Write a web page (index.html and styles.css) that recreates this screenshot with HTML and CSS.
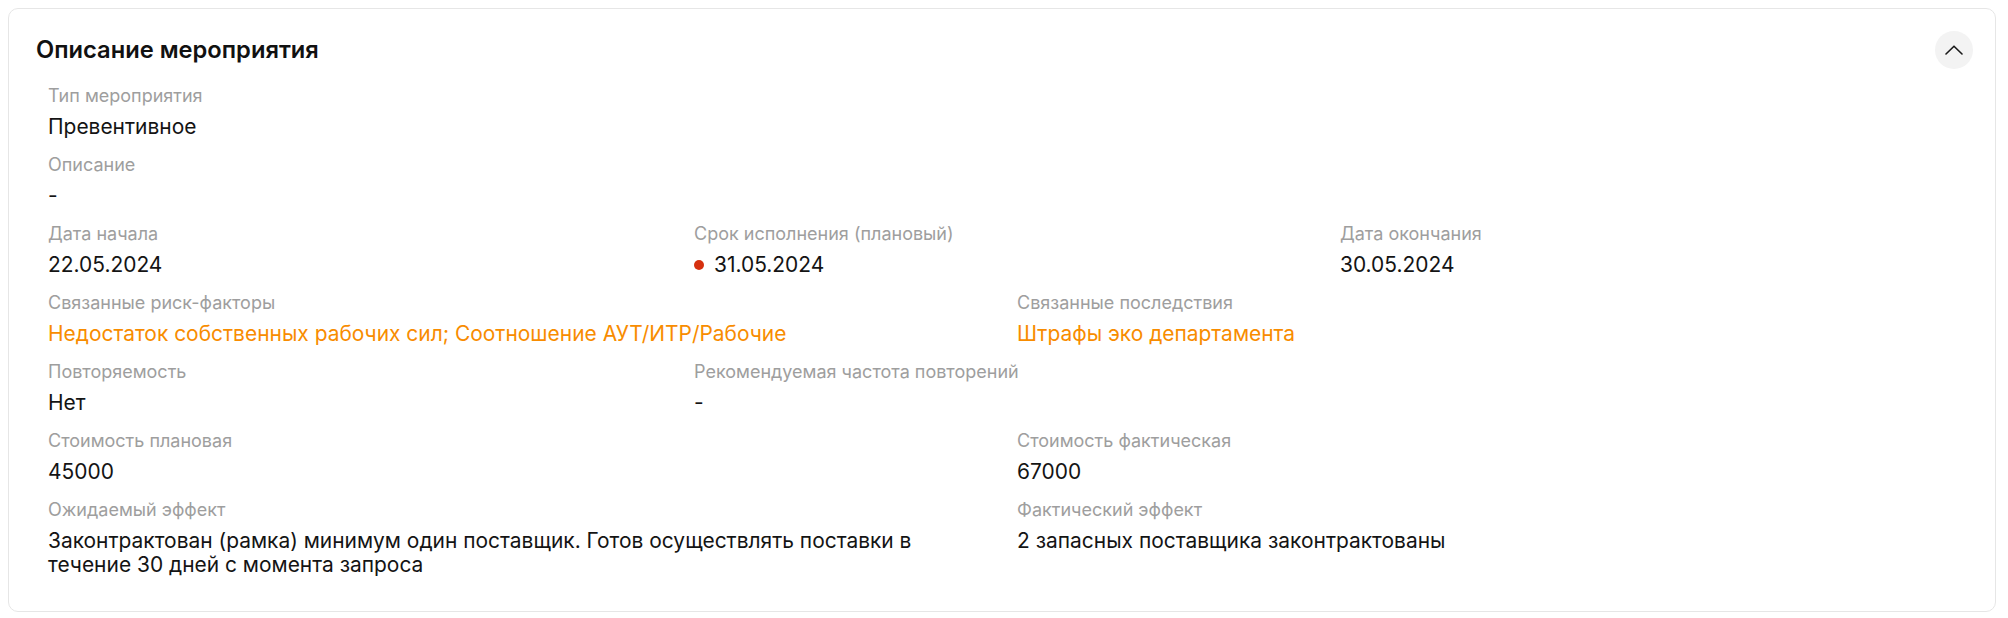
FILE: index.html
```html
<!DOCTYPE html>
<html lang="ru">
  <head>
    <meta charset="UTF-8" />
    <meta name="viewport" content="width=device-width, initial-scale=1.0" />
    <title>Описание мероприятия</title>
    <link rel="stylesheet" href="styles.css">
  </head>
  <body>
    <section class="card">
      <div class="card-header">
        <h2 class="card-title">Описание мероприятия</h2>
        <button class="collapse-button" type="button" aria-label="Свернуть">
          <svg width="18" height="10" viewBox="0 0 18 10" fill="none">
            <path d="M1 9L9 1.2L17 9" stroke="#1a1a1a" stroke-width="1.6" stroke-linecap="round" stroke-linejoin="round" />
          </svg>
        </button>
      </div>

      <div class="fields">
        <div class="field full">
          <div class="field-label">Тип мероприятия</div>
          <div class="field-value">Превентивное</div>
        </div>
        <div class="field full">
          <div class="field-label">Описание</div>
          <div class="field-value">-</div>
        </div>

        <div class="field third">
          <div class="field-label">Дата начала</div>
          <div class="field-value">22.05.2024</div>
        </div>
        <div class="field third">
          <div class="field-label">Срок исполнения (плановый)</div>
          <div class="field-value"><span class="status-dot"></span>31.05.2024</div>
        </div>
        <div class="field third">
          <div class="field-label">Дата окончания</div>
          <div class="field-value">30.05.2024</div>
        </div>

        <div class="field half">
          <div class="field-label">Связанные риск-факторы</div>
          <div class="field-value link">Недостаток собственных рабочих сил; Соотношение АУТ/ИТР/Рабочие</div>
        </div>
        <div class="field half">
          <div class="field-label">Связанные последствия</div>
          <div class="field-value link">Штрафы эко департамента</div>
        </div>

        <div class="field third">
          <div class="field-label">Повторяемость</div>
          <div class="field-value">Нет</div>
        </div>
        <div class="field third wide">
          <div class="field-label">Рекомендуемая частота повторений</div>
          <div class="field-value">-</div>
        </div>

        <div class="field half">
          <div class="field-label">Стоимость плановая</div>
          <div class="field-value">45000</div>
        </div>
        <div class="field half">
          <div class="field-label">Стоимость фактическая</div>
          <div class="field-value">67000</div>
        </div>

        <div class="field half">
          <div class="field-label">Ожидаемый эффект</div>
          <div class="field-value">Законтрактован (рамка) минимум один поставщик. Готов осуществлять поставки в течение 30 дней с момента запроса</div>
        </div>
        <div class="field half">
          <div class="field-label">Фактический эффект</div>
          <div class="field-value">2 запасных поставщика законтрактованы</div>
        </div>
      </div>
    </section>
  </body>
</html>
```

FILE: styles.css
```css
body {
  margin: 8px 12px 8px 8px;
  font-family: Inter, "Noto Sans", sans-serif;
  background-color: #fff;
  color: #141414;
}
.card {
  border: 1px solid #e6e6e6;
  border-radius: 10px;
  padding: 22px 22px 34px 27px;
  background: #fff;
}
.card-header {
  display: flex;
  justify-content: space-between;
  align-items: center;
  margin-bottom: 16px;
}
.card-title {
  margin: 0;
  font-size: 23.7px;
  line-height: 28px;
  font-weight: 600;
  color: #111;
}
.collapse-button {
  width: 38px;
  height: 38px;
  border: none;
  border-radius: 50%;
  background: #f3f3f3;
  display: flex;
  align-items: center;
  justify-content: center;
  padding: 0;
  cursor: pointer;
}
.fields {
  display: grid;
  grid-template-columns: repeat(6, 1fr);
  column-gap: 24px;
  row-gap: 15px;
  padding: 0 11px 0 12px;
}
.field.full {
  grid-column: span 6;
}
.field.half {
  grid-column: span 3;
}
.field.third {
  grid-column: span 2;
}
.field.third.wide {
  grid-column: span 4;
}
.field-label {
  font-size: 18px;
  line-height: 22px;
  color: #9e9e9e;
  margin-bottom: 8px;
  white-space: nowrap;
}
.field-value {
  font-size: 20.95px;
  line-height: 24px;
  color: #141414;
  display: flex;
  align-items: center;
}
.field-value.link {
  color: #f88c00;
}
.status-dot {
  width: 10px;
  height: 10px;
  border-radius: 50%;
  background: #d6300f;
  margin-right: 10px;
  flex-shrink: 0;
}
```
